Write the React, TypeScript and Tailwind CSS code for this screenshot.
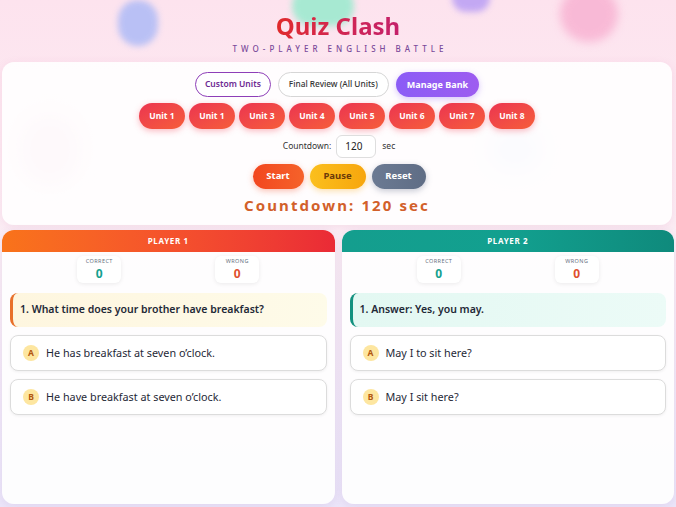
import React from 'react';

const units = ['Unit 1', 'Unit 1', 'Unit 3', 'Unit 4', 'Unit 5', 'Unit 6', 'Unit 7', 'Unit 8'];

type Player = {
  title: string;
  headerClass: string;
  questionClass: string;
  accentClass: string;
  question: string;
  options: string[];
};

const players: Player[] = [
  {
    title: 'PLAYER 1',
    headerClass: 'bg-gradient-to-r from-[#f9731a] via-[#f5522c] to-[#ea2a36]',
    questionClass: 'bg-gradient-to-r from-[#fef6df] to-[#fefbe9]',
    accentClass: 'border-[#e8702a]',
    question: '1. What time does your brother have breakfast?',
    options: ['He has breakfast at seven o\u2019clock.', 'He have breakfast at seven o\u2019clock.'],
  },
  {
    title: 'PLAYER 2',
    headerClass: 'bg-gradient-to-r from-[#149e8e] via-[#12a08f] to-[#0f8a7c]',
    questionClass: 'bg-gradient-to-r from-[#e3f8f2] to-[#ecfbf7]',
    accentClass: 'border-[#13917f]',
    question: '1. Answer: Yes, you may.',
    options: ['May I to sit here?', 'May I sit here?'],
  },
];

function ScoreBox({ label, value, tone }: { label: string; value: number; tone: string }) {
  return (
    <div className="flex h-[27px] w-[44px] flex-col items-center justify-center rounded-md bg-white shadow-[0_1px_4px_rgba(0,0,0,0.08)]">
      <span className="text-[5.5px] leading-none tracking-[0.08em] text-gray-500">{label}</span>
      <span className={`mt-[3px] text-[12px] font-bold leading-none ${tone}`}>{value}</span>
    </div>
  );
}

function PlayerPanel({ p }: { p: Player }) {
  return (
    <section className="flex h-[274px] flex-col overflow-hidden rounded-xl bg-white/90 shadow-[0_2px_10px_rgba(120,80,160,0.12)]">
      <div className={`flex h-[22px] items-center justify-center text-[8px] font-bold tracking-[0.08em] text-white ${p.headerClass}`}>
        {p.title}
      </div>
      <div className="mt-[4px] flex justify-center gap-[94px]">
        <ScoreBox label="CORRECT" value={0} tone="text-[#14a08e]" />
        <ScoreBox label="WRONG" value={0} tone="text-[#e0502e]" />
      </div>
      <div className="mt-[10px] flex flex-col gap-[8px] px-[8px]">
        <div className={`flex h-[34px] items-center rounded-lg border-l-[3px] pl-[7px] text-[10.5px] font-semibold text-[#1f2937] ${p.accentClass} ${p.questionClass}`}>
          {p.question}
        </div>
        {p.options.map((o, i) => (
          <div
            key={o}
            className="flex h-[36px] items-center gap-[7px] rounded-lg border border-[#dcdcdc] bg-white pl-[12px] shadow-[0_1px_3px_rgba(0,0,0,0.06)]"
          >
            <span className="flex h-[16px] w-[16px] items-center justify-center rounded-full bg-[#fde6a0] text-[8.5px] font-bold text-[#b2570f]">
              {i === 0 ? 'A' : 'B'}
            </span>
            <span className="text-[10.8px] text-[#1f2937]">{o}</span>
          </div>
        ))}
      </div>
    </section>
  );
}

export default function App() {
  return (
    <div
      className="relative h-screen overflow-hidden bg-gradient-to-b from-[#fde3ee] via-[#fbeef5] to-[#ece6fa] px-[2px]"
      style={{ fontFamily: '"Noto Sans", "Open Sans", sans-serif' }}
    >
      {/* soft background blobs */}
      <div className="pointer-events-none absolute left-[118px] top-[0px] h-[46px] w-[40px] rounded-full bg-[#a9b8f7] opacity-80 blur-[3px]" />
      <div className="pointer-events-none absolute left-[292px] top-[-14px] h-[40px] w-[62px] rounded-full bg-[#92ebcc] opacity-80 blur-[3px]" />
      <div className="pointer-events-none absolute left-[452px] top-[-16px] h-[28px] w-[38px] rounded-full bg-[#b59af5] opacity-80 blur-[3px]" />
      <div className="pointer-events-none absolute left-[560px] top-[-14px] h-[56px] w-[58px] rounded-full bg-[#f7a8cc] opacity-70 blur-[5px]" />
      <div className="pointer-events-none absolute left-[20px] top-[115px] h-[70px] w-[60px] rounded-full bg-[#f7a6c6] opacity-60 blur-[10px]" />
      <div className="pointer-events-none absolute left-[490px] top-[130px] h-[40px] w-[50px] rounded-full bg-[#b5c8f5] opacity-60 blur-[10px]" />

      <header className="relative flex h-[62px] flex-col items-center pt-[11px]">
        <h1 className="bg-gradient-to-r from-[#e02a2a] to-[#c4206a] bg-clip-text text-[24px] font-bold leading-[30px] text-transparent">
          Quiz Clash
        </h1>
        <p className="mt-[2px] pl-[0.5em] text-[8px] font-medium tracking-[0.5em] text-[#7a4a9a]">TWO-PLAYER ENGLISH BATTLE</p>
      </header>

      <main className="relative mr-[2px] flex flex-col items-center rounded-xl bg-white/90 pb-[11px] pt-[10px] shadow-[0_2px_10px_rgba(200,80,140,0.1)]">
        <div className="flex gap-[7px]">
          <button className="h-[25px] rounded-full border border-[#8e3fb8] bg-white px-[9px] text-[8.5px] font-semibold text-[#6d2a92]">
            Custom Units
          </button>
          <button className="h-[25px] rounded-full border border-[#d6d6d6] bg-white px-[10px] text-[8.3px] font-medium text-[#333]">
            Final Review (All Units)
          </button>
          <button className="h-[25px] rounded-full bg-gradient-to-r from-[#8b5cf6] to-[#9d5cf0] px-[11px] text-[9px] font-bold text-white shadow-[0_2px_6px_rgba(139,92,246,0.35)]">
            Manage Bank
          </button>
        </div>

        <div className="mt-[6px] flex gap-[4px]">
          {units.map((u, i) => (
            <button
              key={i}
              className="h-[26px] w-[46px] rounded-full bg-gradient-to-br from-[#ec3350] to-[#f65d38] text-[8.5px] font-bold text-white shadow-[0_2px_6px_rgba(240,60,80,0.35)]"
            >
              {u}
            </button>
          ))}
        </div>

        <div className="mt-[6px] flex items-center gap-[5px] pl-[4px] text-[8.5px] text-[#333]">
          <span>Countdown:</span>
          <div className="flex h-[23px] w-[40px] items-center rounded-md border border-[#dedede] bg-white pl-[8px] text-[10px] text-[#222]">
            120
          </div>
          <span className="ml-[1px]">sec</span>
        </div>

        <div className="mt-[6px] flex gap-[6px] pl-[4px]">
          <button className="h-[25px] w-[51px] rounded-full bg-gradient-to-r from-[#f2461f] to-[#f5622a] text-[9.5px] font-bold text-white shadow-[0_2px_6px_rgba(240,80,40,0.35)]">
            Start
          </button>
          <button className="h-[25px] w-[56px] rounded-full bg-gradient-to-r from-[#fbbf1d] to-[#f7a60c] text-[9.5px] font-bold text-[#6b3a0a] shadow-[0_2px_6px_rgba(245,170,20,0.35)]">
            Pause
          </button>
          <button className="h-[25px] w-[54px] rounded-full bg-gradient-to-r from-[#6b7a93] to-[#5f6d85] text-[9.5px] font-bold text-white shadow-[0_2px_6px_rgba(90,100,130,0.35)]">
            Reset
          </button>
        </div>

        <div className="mt-[7px] text-[15px] font-bold leading-[18px] tracking-[0.14em] text-[#d2602a]">
          Countdown: 120 sec
        </div>
      </main>

      <div className="relative mt-[5px] grid grid-cols-2 gap-[7px]">
        {players.map((p) => (
          <PlayerPanel key={p.title} p={p} />
        ))}
      </div>
    </div>
  );
}
